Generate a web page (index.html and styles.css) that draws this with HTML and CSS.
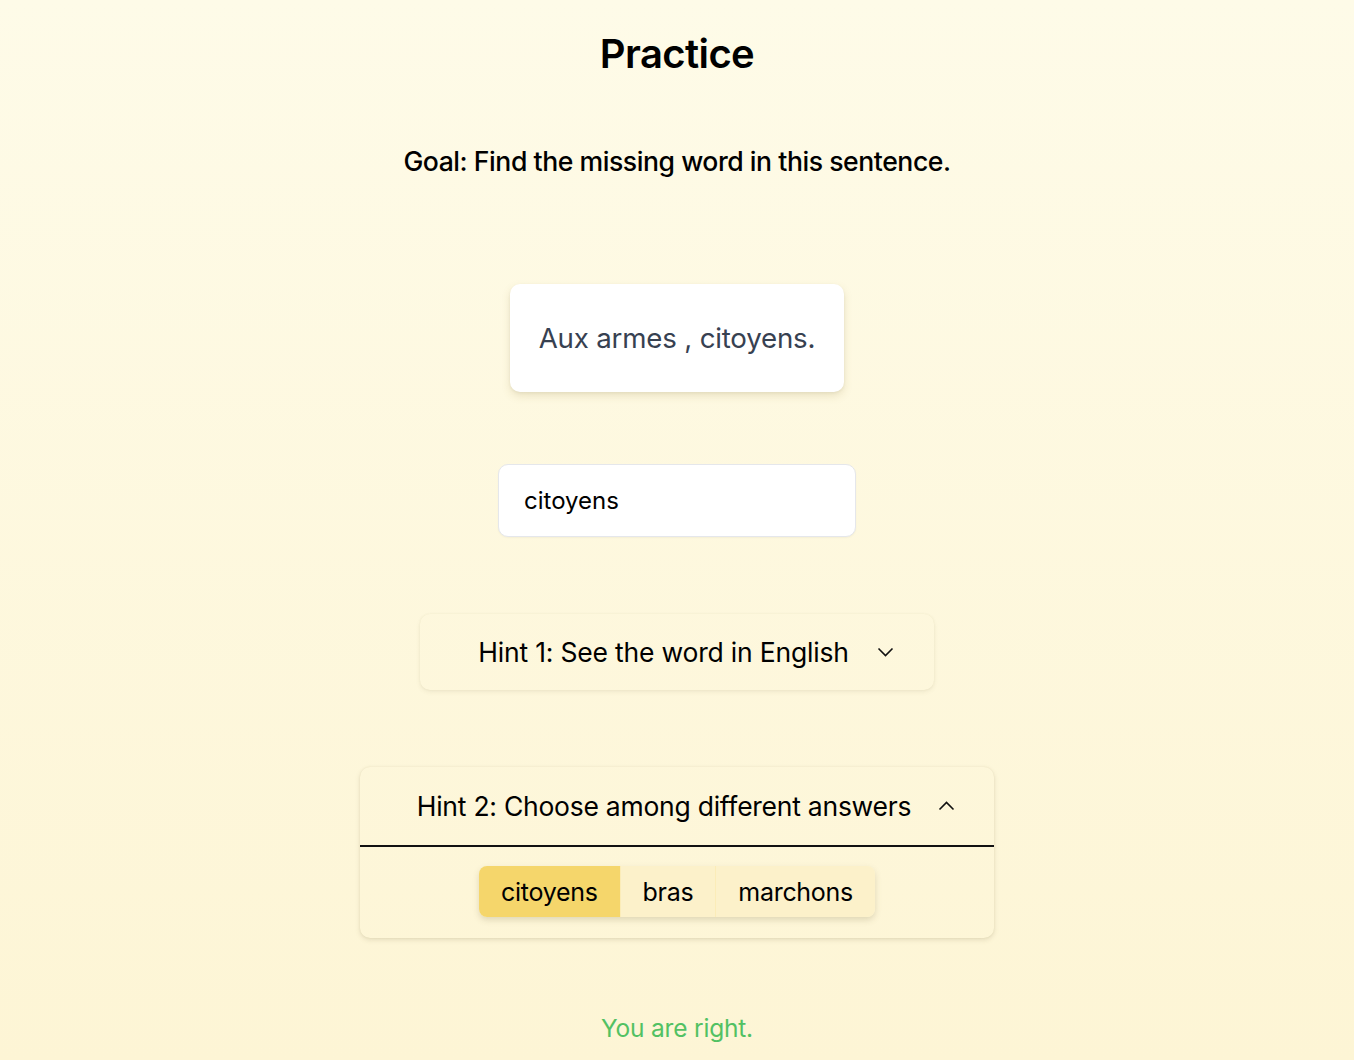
FILE: index.html
```html
<!DOCTYPE html>
<html lang="en">
<head>
<meta charset="utf-8">
<title>Practice</title>
<link rel="stylesheet" href="styles.css">
</head>
<body>
<main class="page">
  <h1 class="title">Practice</h1>
  <p class="goal">Goal: Find the missing word in this sentence.</p>
  <div class="sentence-card">Aux armes , citoyens.</div>
  <input class="answer" type="text" value="citoyens">
  <section class="hint hint-closed">
    <div class="hint-head">
      <span>Hint 1: See the word in English</span>
      <svg class="chev" width="17" height="10" viewBox="0 0 17 10"><path d="M1.5 1.5 L8.5 8.5 L15.5 1.5" fill="none" stroke="#111" stroke-width="1.6"/></svg>
    </div>
  </section>
  <section class="hint hint-open">
    <div class="hint-head hint-head-open">
      <span>Hint 2: Choose among different answers</span>
      <svg class="chev" width="17" height="10" viewBox="0 0 17 10"><path d="M1.5 8.5 L8.5 1.5 L15.5 8.5" fill="none" stroke="#111" stroke-width="1.6"/></svg>
    </div>
    <div class="hint-body">
      <div class="choices">
        <button class="choice choice-active">citoyens</button>
        <button class="choice">bras</button>
        <button class="choice">marchons</button>
      </div>
    </div>
  </section>
  <p class="result">You are right.</p>
</main>
</body>
</html>
```

FILE: styles.css
```css
html, body {
  margin: 0;
  padding: 0;
}
body {
  min-height: 1060px;
  background: linear-gradient(180deg, #fefbe8 0%, #fdf5d5 100%);
  font-family: Inter, "Noto Sans", "Liberation Sans", sans-serif;
  color: #000;
}
.page {
  display: flex;
  flex-direction: column;
  align-items: center;
}
.title {
  margin: 28px 0 0;
  font-size: 40px;
  line-height: 52px;
  font-weight: 600;
  letter-spacing: -0.6px;
}
.goal {
  margin: 65px 0 0;
  font-size: 26.6px;
  line-height: 32px;
  font-weight: 500;
  letter-spacing: -0.45px;
}
.sentence-card {
  margin-top: 107px;
  background: #fff;
  border-radius: 10px;
  box-shadow: 0 4px 8px rgba(150, 130, 60, 0.18), 0 1px 3px rgba(0,0,0,0.06);
  padding: 35px 29px;
  font-size: 27.7px;
  line-height: 38px;
  color: #374151;
  letter-spacing: -0.2px;
}
.answer {
  margin-top: 72px;
  width: 358px;
  height: 73px;
  box-sizing: border-box;
  border: 1px solid #e5e7eb;
  border-radius: 10px;
  background: #fff;
  padding: 0 25px;
  font-family: inherit;
  font-size: 24px;
  color: #000;
  outline: none;
  box-shadow: 0 1px 2px rgba(0,0,0,0.04);
}
.hint {
  border-radius: 10px;
  background: transparent;
  box-shadow: 0 2px 4px rgba(120, 110, 70, 0.10), 0 0 2px rgba(120, 110, 70, 0.08);
}
.hint-closed {
  margin-top: 77px;
}
.hint-open {
  margin-top: 77px;
  box-shadow: 0 2px 5px rgba(120, 110, 70, 0.18), 0 0 2px rgba(120, 110, 70, 0.10);
}
.hint-head {
  display: flex;
  align-items: center;
  gap: 28px;
  height: 76px;
  padding: 0 40px 0 58px;
  font-size: 26.5px;
  letter-spacing: -0.2px;
}
.hint-head-open {
  height: 78px;
  gap: 27px;
  padding: 0 39px 0 57px;
  border-bottom: 2px solid #111;
  letter-spacing: -0.25px;
}
.chev {
  display: block;
}
.hint-body {
  display: flex;
  justify-content: center;
  padding: 19px 0 21px;
}
.choices {
  display: flex;
  border-radius: 8px;
  overflow: hidden;
  box-shadow: 0 3px 6px rgba(120, 110, 70, 0.22);
}
.choice {
  border: none;
  border-left: 1px solid #fbecb8;
  background: #fcf1ca;
  font-family: inherit;
  font-size: 25px;
  color: #000;
  height: 51px;
  padding: 0 22px;
  letter-spacing: -0.3px;
}
.choice:first-child {
  border-left: none;
}
.choice-active {
  background: #f5d66b;
}
.result {
  margin: 74px 0 0;
  font-size: 24.5px;
  line-height: 32px;
  color: #52c163;
  letter-spacing: -0.2px;
}
```
